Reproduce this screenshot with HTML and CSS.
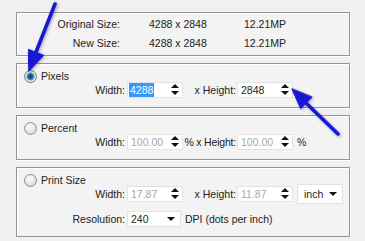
FILE: index.html
```html
<!DOCTYPE html>
<html>
<head>
<title>Resize</title>
<link rel="stylesheet" href="styles.css">
</head>
<body>
<div class="page">
	<div class="panel info">
		<div class="inforow"><div class="name">Original Size:</div><div class="dims">4288 x 2848</div><div class="mp">12.21MP</div></div>
		<div class="inforow"><div class="name">New Size:</div><div class="dims">4288 x 2848</div><div class="mp">12.21MP</div></div>
	</div>
	<div class="panel opt">
		<div class="choice"><span class="radio on"></span>Pixels</div>
		<div class="field">
			<div class="name">Width:</div>
			<div class="box"><span class="sel">4288</span><span class="spin"><i class="up"></i><i class="down"></i></span></div>
			<div class="name2">x Height:</div>
			<div class="box">2848<span class="spin"><i class="up"></i><i class="down"></i></span></div>
		</div>
	</div>
	<div class="panel opt">
		<div class="choice"><span class="radio"></span>Percent</div>
		<div class="field">
			<div class="name">Width:</div>
			<div class="box off">100.00<span class="spin"><i class="up"></i><i class="down"></i></span></div>
			<div class="name2 tight">% x Height:</div>
			<div class="box off">100.00<span class="spin"><i class="up"></i><i class="down"></i></span></div>
			<div class="unit">%</div>
		</div>
	</div>
	<div class="panel opt print">
		<div class="choice"><span class="radio"></span>Print Size</div>
		<div class="field">
			<div class="name">Width:</div>
			<div class="box off">17.87<span class="spin"><i class="up"></i><i class="down"></i></span></div>
			<div class="name2">x Height:</div>
			<div class="box off">11.87<span class="spin"><i class="up"></i><i class="down"></i></span></div>
			<div class="combo unitbox">inch<i class="drop"></i></div>
		</div>
		<div class="field res">
			<div class="name">Resolution:</div>
			<div class="combo">240<i class="drop"></i></div>
			<div class="unit">DPI (dots per inch)</div>
		</div>
	</div>
</div>
<svg class="arrows" width="365" height="241" viewBox="0 0 365 241">
	<g fill="#1818d4" stroke="#1818d4" stroke-linecap="round" stroke-linejoin="round">
		<line x1="55" y1="4" x2="36" y2="52" stroke-width="3.5"/>
		<polygon points="29,71 43.7,55.3 28.7,49.5" stroke-width="1"/>
		<line x1="338" y1="134" x2="306" y2="103" stroke-width="3.5"/>
		<polygon points="292,89 300.7,108.7 311.9,97.3" stroke-width="1"/>
	</g>
</svg>
</body>
</html>
```

FILE: styles.css
```css
html,body{
	margin:0;
	padding:0;
	background-color:#f0f0f0;
	font-family:"Liberation Sans",Arial,sans-serif;
	font-size:10.5px;
	color:#222222;
}
.page{
	padding:12px 15px 0 16px;
	display:flex;
	flex-direction:column;
	gap:7px;
}
.panel{
	box-sizing:border-box;
	width:334px;
	border:1px solid #959595;
	box-shadow:inset 1px 1px 0 #ffffff, 1px 1px 0 #ffffff;
	background-color:#f3f3f3;
}
.panel.info{
	height:44px;
	padding-top:2px;
}
.inforow{
	display:flex;
	height:19px;
	line-height:19px;
}
.inforow>.name{
	width:103px;
	text-align:right;
}
.inforow>.dims{
	margin-left:29px;
	width:95px;
}
.panel.opt{
	height:45px;
	padding-top:5px;
}
.panel.print{
	height:70px;
}
.choice{
	display:flex;
	align-items:center;
	height:14px;
	padding-left:7px;
}
.radio{
	box-sizing:border-box;
	width:13px;
	height:13px;
	border-radius:50%;
	border:1px solid #8e8f8f;
	background:radial-gradient(circle at 40% 35%, #ffffff 0, #dcdcdc 70%, #c8c8c8 100%);
	margin-right:4px;
}
.radio.on{
	border-color:#6f7c86;
	background:radial-gradient(circle at 50% 50%, #0d3a5c 0, #1f5f8e 25%, #4d9bd0 45%, #e6eef4 58%, #cfd6dc 100%);
}
.field{
	display:flex;
	align-items:center;
	height:16px;
	margin-top:-1px;
	white-space:nowrap;
}
.field.res{
	margin-top:9px;
}
.field>.name{
	width:108px;
	text-align:right;
	padding-right:2px;
}
.field>.name2{
	display:flex;
	justify-content:flex-end;
	width:53px;
	padding-right:1px;
}
.field>.name2.tight{
	letter-spacing:-0.2px;
}
.box,.combo{
	position:relative;
	box-sizing:border-box;
	width:56px;
	height:16px;
	line-height:14px;
	padding-left:3px;
	background-color:#ffffff;
	border:1px solid #e2e3e4;
}
.box.off{
	color:#a6a6a6;
}
.sel{
	display:inline-block;
	margin-left:-2px;
	padding:0 1px;
	background-color:#3399ff;
	color:#ffffff;
}
.spin{
	position:absolute;
	right:3px;
	top:1px;
	display:flex;
	flex-direction:column;
	gap:3px;
}
.spin i{
	display:block;
	width:0;
	height:0;
	border-left:4px solid transparent;
	border-right:4px solid transparent;
}
.spin i.up{
	border-bottom:4px solid #111111;
}
.spin i.down{
	border-top:4px solid #111111;
}
.combo{
	width:54px;
}
.combo i.drop{
	position:absolute;
	right:5px;
	top:5px;
	width:0;
	height:0;
	border-left:4px solid transparent;
	border-right:4px solid transparent;
	border-top:4px solid #111111;
}
.combo.unitbox{
	margin-left:4px;
	width:46px;
	height:20px;
	line-height:18px;
	padding-left:6px;
}
.combo.unitbox i.drop{
	top:7px;
}
.unit{
	margin-left:4px;
}
.arrows{
	position:absolute;
	top:0;
	left:0;
	pointer-events:none;
	filter:drop-shadow(1px 1px 1.5px rgba(40,40,120,0.45));
}
```
